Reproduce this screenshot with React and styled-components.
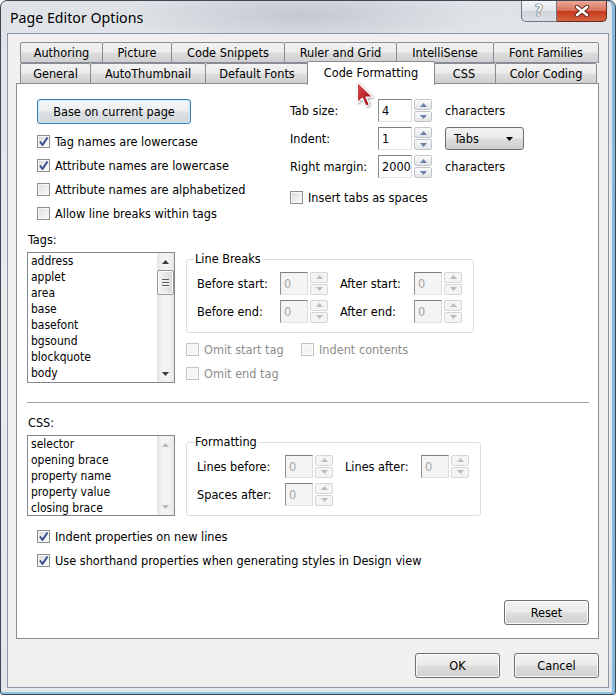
import React from "react";
import styled, { createGlobalStyle } from "styled-components";

const GlobalStyle = createGlobalStyle`
  html, body {
    margin: 0;
    padding: 0;
    background: #ffffff;
  }
  body {
    font-family: "DejaVu Sans Condensed", "DejaVu Sans", sans-serif;
    font-stretch: condensed;
    font-size: 12.6px;
    color: #000;
  }
  * {
    box-sizing: border-box;
  }
`;

const backTabs = [
  { label: "Authoring", w: 83 },
  { label: "Picture", w: 70 },
  { label: "Code Snippets", w: 114 },
  { label: "Ruler and Grid", w: 113 },
  { label: "IntelliSense", w: 98 },
  { label: "Font Families", w: 106 },
];
const frontTabs = [
  { label: "General", w: 71 },
  { label: "AutoThumbnail", w: 116 },
  { label: "Default Fonts", w: 104 },
  { label: "Code Formatting", w: 128, selected: true },
  { label: "CSS", w: 64 },
  { label: "Color Coding", w: 102 },
];
const tagItems = ["address", "applet", "area", "base", "basefont", "bgsound", "blockquote", "body"];
const cssItems = ["selector", "opening brace", "property name", "property value", "closing brace"];

function Checkbox({ checked, disabled }) {
  return (
    <CheckBoxBox $disabled={disabled}>
      {checked && (
        <svg width="11" height="11" viewBox="0 0 11 11">
          <path d="M2 5.5 L4.5 9 L9.5 1.5" fill="none" stroke="#3a4c94" strokeWidth="2" strokeLinejoin="round" />
        </svg>
      )}
    </CheckBoxBox>
  );
}

function Check({ label, checked, disabled, w }) {
  return (
    <CheckRow $w={w}>
      <Checkbox checked={checked} disabled={disabled} />
      <CheckLabel $disabled={disabled}>{label}</CheckLabel>
    </CheckRow>
  );
}

function Arrow({ up, color }) {
  return (
    <svg width="7" height="4" viewBox="0 0 7 4">
      <path d={up ? "M0 4 L3.5 0 L7 4 Z" : "M0 0 L7 0 L3.5 4 Z"} fill={color} />
    </svg>
  );
}

function Spinner({ value, w, disabled }) {
  const c = disabled ? "#b9bcc0" : "#6d82a8";
  return (
    <SpinWrap>
      <SpinInput $w={w} $disabled={disabled}>{value}</SpinInput>
      <SpinButtons>
        <SpinBtn $disabled={disabled}><Arrow up color={c} /></SpinBtn>
        <SpinBtn $disabled={disabled}><Arrow color={c} /></SpinBtn>
      </SpinButtons>
    </SpinWrap>
  );
}

function ListBox({ items, h, disabledScroll }) {
  const c = disabledScroll ? "#b5b5b5" : "#3c3c3c";
  return (
    <List $h={h}>
      <ListItems>
        {items.map((it) => (
          <ListItem key={it}>{it}</ListItem>
        ))}
      </ListItems>
      <ScrollBar>
        <ScrollArrow><Arrow up color={c} /></ScrollArrow>
        <ScrollTrack>
          {!disabledScroll && (
            <Thumb>
              <Grip />
              <Grip />
              <Grip />
            </Thumb>
          )}
        </ScrollTrack>
        <ScrollArrow><Arrow color={c} /></ScrollArrow>
      </ScrollBar>
    </List>
  );
}

export default function App() {
  return (
    <>
      <GlobalStyle />
      <Window>
        <TitleBar>
          <Title>Page Editor Options</Title>
          <Captions>
            <CaptionButton>
              <HelpGlyph>?</HelpGlyph>
            </CaptionButton>
            <CaptionButton $close>
              <svg width="16" height="12" viewBox="0 0 16 12">
                <path d="M3 2 L13 10 M13 2 L3 10" stroke="#5b2418" strokeWidth="4.4" strokeLinecap="round" />
                <path d="M3 2 L13 10 M13 2 L3 10" stroke="#ffffff" strokeWidth="2.6" strokeLinecap="round" />
              </svg>
            </CaptionButton>
          </Captions>
        </TitleBar>

        <Client>
          <TabRow $back>
            {backTabs.map((t) => (
              <Tab key={t.label} $w={t.w}>{t.label}</Tab>
            ))}
          </TabRow>
          <TabRow>
            {frontTabs.map((t) => (
              <Tab key={t.label} $w={t.w} $selected={t.selected}>{t.label}</Tab>
            ))}
          </TabRow>

          <Panel>
            <TopSection>
              <LeftCol>
                <Button $w={154} $focused>Base on current page</Button>
                <CheckStack>
                  <Check label="Tag names are lowercase" checked />
                  <Check label="Attribute names are lowercase" checked />
                  <Check label="Attribute names are alphabetized" />
                  <Check label="Allow line breaks within tags" />
                </CheckStack>
              </LeftCol>
              <RightCol>
                <FieldRow>
                  <span>Tab size:</span>
                  <Spinner value="4" w={34} />
                  <span>characters</span>
                </FieldRow>
                <FieldRow>
                  <span>Indent:</span>
                  <Spinner value="1" w={34} />
                  <Select>
                    <span>Tabs</span>
                    <Arrow color="#000" />
                  </Select>
                </FieldRow>
                <FieldRow>
                  <span>Right margin:</span>
                  <Spinner value="2000" w={34} />
                  <span>characters</span>
                </FieldRow>
                <InsertRow>
                  <Check label="Insert tabs as spaces" />
                </InsertRow>
              </RightCol>
            </TopSection>

            <SectionLabel>Tags:</SectionLabel>
            <ListRow>
              <ListBox items={tagItems} h={131} />
              <SideStack>
                <GroupBox $w={288}>
                  <Legend>Line Breaks</Legend>
                  <SpinGrid $cols="83px 48px 86px 48px">
                    <span>Before start:</span>
                    <Spinner value="0" w={28} disabled />
                    <GridLabel>After start:</GridLabel>
                    <Spinner value="0" w={28} disabled />
                    <span>Before end:</span>
                    <Spinner value="0" w={28} disabled />
                    <GridLabel>After end:</GridLabel>
                    <Spinner value="0" w={28} disabled />
                  </SpinGrid>
                </GroupBox>
                <OmitStack>
                  <CheckLine>
                    <Check label="Omit start tag" disabled w={115} />
                    <Check label="Indent contents" disabled />
                  </CheckLine>
                  <Check label="Omit end tag" disabled />
                </OmitStack>
              </SideStack>
            </ListRow>

            <Separator />

            <SectionLabel $tight>CSS:</SectionLabel>
            <ListRow>
              <ListBox items={cssItems} h={81} disabledScroll />
              <GroupBox $w={295}>
                <Legend>Formatting</Legend>
                <SpinGrid $cols="88px 48px 88px 48px">
                  <span>Lines before:</span>
                  <Spinner value="0" w={28} disabled />
                  <GridLabel>Lines after:</GridLabel>
                  <Spinner value="0" w={28} disabled />
                  <span>Spaces after:</span>
                  <Spinner value="0" w={28} disabled />
                </SpinGrid>
              </GroupBox>
            </ListRow>

            <BottomChecks>
              <Check label="Indent properties on new lines" checked />
              <Check label="Use shorthand properties when generating styles in Design view" checked />
            </BottomChecks>

            <ResetRow>
              <Button $w={85}>Reset</Button>
            </ResetRow>
          </Panel>

          <Footer>
            <Button $w={85}>OK</Button>
            <Button $w={85}>Cancel</Button>
          </Footer>
        </Client>

        <Cursor width="19" height="27" viewBox="0 0 13 19">
          <defs>
            <linearGradient id="cur" x1="0" y1="0" x2="1" y2="1">
              <stop offset="0" stopColor="#e8464a" />
              <stop offset="1" stopColor="#8c1016" />
            </linearGradient>
          </defs>
          <path d="M0.8 0.8 L0.8 15.5 L4.3 12.2 L6.8 17.8 L9.3 16.7 L6.9 11.3 L11.6 11.3 Z" fill="url(#cur)" stroke="#ffffff" strokeWidth="0.9" strokeLinejoin="round" />
        </Cursor>
      </Window>
    </>
  );
}

const Window = styled.div`
  position: relative;
  width: 616px;
  height: 695px;
  display: flex;
  flex-direction: column;
  padding: 0 6px 6px 6px;
  border: 1px solid #3d4753;
  border-radius: 7px 7px 3px 3px;
  background:
    radial-gradient(ellipse 180px 30px at 300px 14px, rgba(160, 168, 178, 0.45), transparent),
    linear-gradient(180deg, #dfe3e8 0%, #e9ecef 45%, #e3e7eb 100%);
  box-shadow: inset -3px 0 0 #86b9de, inset 0 -2px 0 #8fc3e2;
`;

const TitleBar = styled.div`
  height: 32px;
  display: flex;
  justify-content: space-between;
  align-items: flex-start;
`;

const Title = styled.div`
  font-family: "Noto Sans", "Open Sans", sans-serif;
  font-stretch: normal;
  font-size: 14.2px;
  line-height: 20px;
  padding: 7px 0 0 3px;
  color: #000;
`;

const Captions = styled.div`
  display: flex;
  margin-right: 2px;
`;

const CaptionButton = styled.div`
  width: ${(p) => (p.$close ? 50 : 36)}px;
  height: 21px;
  display: flex;
  align-items: center;
  justify-content: center;
  border: 1px solid ${(p) => (p.$close ? "#6a2a1e" : "#6d7781")};
  border-top: none;
  border-left: ${(p) => (p.$close ? "none" : "1px solid #6d7781")};
  border-radius: ${(p) => (p.$close ? "0 0 5px 0" : "0 0 0 5px")};
  background: ${(p) =>
    p.$close
      ? "linear-gradient(180deg, #e9a996 0%, #d9705a 48%, #c7391c 52%, #d4613f 100%)"
      : "linear-gradient(180deg, #f3f5f7 0%, #e3e7eb 48%, #d0d6dc 52%, #dbe0e5 100%)"};
`;

const HelpGlyph = styled.span`
  font-family: "DejaVu Sans", sans-serif;
  font-weight: bold;
  font-size: 15px;
  color: #f4f4f4;
  text-shadow: 0 0 1px #4b4f55, 0 0 1px #4b4f55, 0 0 1px #4b4f55;
`;

const Client = styled.div`
  flex: 1;
  display: flex;
  flex-direction: column;
  border: 1px solid #8b97a4;
  background: #f0f0f0;
  padding: 8px 9px 9px 8px;
`;

const TabRow = styled.div`
  position: relative;
  z-index: ${(p) => (p.$back ? 0 : 2)};
  display: flex;
  height: 21px;
  margin-left: 4px;
`;

const Tab = styled.div`
  flex: 0 0 ${(p) => p.$w}px;
  position: relative;
  display: flex;
  align-items: center;
  justify-content: center;
  white-space: nowrap;
  height: ${(p) => (p.$selected ? 24 : 21)}px;
  margin: ${(p) => (p.$selected ? "-2px -2px 0 -2px" : "0 0 0 -1px")};
  z-index: ${(p) => (p.$selected ? 2 : 0)};
  border: 1px solid #898c95;
  border-bottom: ${(p) => (p.$selected ? "none" : "1px solid #898c95")};
  border-radius: 2px 2px 0 0;
  background: ${(p) =>
    p.$selected ? "#ffffff" : "linear-gradient(180deg, #f2f2f2 0%, #ebebeb 48%, #dddddd 52%, #cfcfcf 100%)"};
  padding-bottom: ${(p) => (p.$selected ? 3 : 0)}px;
  &:first-child {
    margin-left: ${(p) => (p.$selected ? -2 : 0)}px;
  }
`;

const Panel = styled.div`
  position: relative;
  z-index: 1;
  flex: 1;
  display: flex;
  flex-direction: column;
  margin-top: -1px;
  border: 1px solid #898c95;
  background: #ffffff;
  padding: 15px 9px 13px 10px;
`;

const TopSection = styled.div`
  display: flex;
  padding-left: 10px;
`;

const LeftCol = styled.div`
  width: 253px;
  display: flex;
  flex-direction: column;
`;

const CheckStack = styled.div`
  margin-top: 5px;
  display: flex;
  flex-direction: column;
`;

const RightCol = styled.div`
  display: flex;
  flex-direction: column;
  gap: 5px;
`;

const FieldRow = styled.div`
  display: grid;
  grid-template-columns: 88px 67px auto;
  align-items: center;
  height: 23px;
  white-space: nowrap;
`;

const InsertRow = styled.div`
  margin-top: 2px;
`;

const Button = styled.div`
  width: ${(p) => p.$w}px;
  height: 25px;
  display: flex;
  align-items: center;
  justify-content: center;
  border: 1px solid ${(p) => (p.$focused ? "#3c7fb1" : "#707070")};
  border-radius: 3px;
  background: ${(p) =>
    p.$focused
      ? "linear-gradient(180deg, #f4f6f8 0%, #eceef0 48%, #dde1e4 52%, #d2d7db 100%)"
      : "linear-gradient(180deg, #f2f2f2 0%, #ebebeb 48%, #dddddd 52%, #cfcfcf 100%)"};
  box-shadow: ${(p) => (p.$focused ? "inset 0 0 0 1px #c7e8f8" : "inset 0 0 0 1px #fbfbfb")};
`;

const CheckRow = styled.div`
  display: flex;
  align-items: center;
  gap: 5px;
  height: 24px;
  width: ${(p) => (p.$w ? `${p.$w}px` : "auto")};
  white-space: nowrap;
`;

const CheckBoxBox = styled.div`
  width: 13px;
  height: 13px;
  flex: none;
  display: flex;
  align-items: center;
  justify-content: center;
  border: 1px solid ${(p) => (p.$disabled ? "#c4c4c4" : "#8e8f8f")};
  background: ${(p) => (p.$disabled ? "#f4f4f4" : "linear-gradient(135deg, #d8d8d8 0%, #f0f0f0 60%, #fbfbfb 100%)")};
  box-shadow: inset 0 0 0 1px ${(p) => (p.$disabled ? "#fafafa" : "#f6f6f6")};
`;

const CheckLabel = styled.span`
  color: ${(p) => (p.$disabled ? "#8d8d8d" : "#000")};
`;

const SpinWrap = styled.div`
  display: flex;
  gap: 2px;
  align-items: center;
`;

const SpinInput = styled.div`
  width: ${(p) => p.$w}px;
  height: 23px;
  display: flex;
  align-items: center;
  padding-left: 3px;
  border: 1px solid;
  border-color: #7e7e7e #dadada #e3e3e3 #8f8f8f;
  background: ${(p) => (p.$disabled ? "#f4f4f4" : "#ffffff")};
  color: ${(p) => (p.$disabled ? "#a3a3a3" : "#000")};
`;

const SpinButtons = styled.div`
  display: flex;
  flex-direction: column;
  gap: 1px;
`;

const SpinBtn = styled.div`
  width: 18px;
  height: 11px;
  display: flex;
  align-items: center;
  justify-content: center;
  border: 1px solid ${(p) => (p.$disabled ? "#d6d6d6" : "#c2c6cc")};
  border-radius: 2px;
  background: ${(p) => (p.$disabled ? "#f4f4f4" : "linear-gradient(180deg, #fafafa, #e3e5e8)")};
`;

const Select = styled.div`
  width: 79px;
  height: 23px;
  display: flex;
  align-items: center;
  justify-content: space-between;
  padding: 0 10px 0 8px;
  border: 1px solid #707070;
  border-radius: 3px;
  background: linear-gradient(180deg, #f2f2f2 0%, #ebebeb 48%, #dddddd 52%, #cfcfcf 100%);
`;

const SectionLabel = styled.div`
  margin-top: ${(p) => (p.$tight ? 11 : 7)}px;
  line-height: 16px;
  padding-left: 1px;
`;

const ListRow = styled.div`
  margin-top: 4px;
  display: flex;
  align-items: flex-start;
  gap: 11px;
`;

const List = styled.div`
  width: 148px;
  height: ${(p) => p.$h}px;
  display: flex;
  border: 1px solid #828790;
  background: #ffffff;
`;

const ListItems = styled.div`
  flex: 1;
  overflow: hidden;
  padding: 0 0 0 3px;
  font-size: 12px;
`;

const ListItem = styled.div`
  line-height: 16px;
  white-space: nowrap;
`;

const ScrollBar = styled.div`
  width: 17px;
  display: flex;
  flex-direction: column;
  background: linear-gradient(90deg, #e3e3e3 0%, #f3f3f3 30%, #f3f3f3 70%, #e6e6e6 100%);
`;

const ScrollArrow = styled.div`
  height: 17px;
  flex: none;
  display: flex;
  align-items: center;
  justify-content: center;
`;

const ScrollTrack = styled.div`
  flex: 1;
  display: flex;
  flex-direction: column;
`;

const Thumb = styled.div`
  height: 25px;
  display: flex;
  flex-direction: column;
  align-items: center;
  justify-content: center;
  gap: 2px;
  border: 1px solid #959595;
  border-radius: 2px;
  background: linear-gradient(90deg, #f3f3f3 0%, #e8e8e8 50%, #d6d6d6 100%);
  box-shadow: inset 0 0 0 1px #fbfbfb;
`;

const Grip = styled.div`
  width: 7px;
  height: 1px;
  background: #5e5e5e;
  box-shadow: 0 1px 0 #f5f5f5;
`;

const SideStack = styled.div`
  display: flex;
  flex-direction: column;
`;

const GroupBox = styled.fieldset`
  margin: 0;
  width: ${(p) => p.$w}px;
  min-width: 0;
  border: 1px solid #d5dfe5;
  border-radius: 3px;
  padding: 5px 10px 9px 10px;
`;

const Legend = styled.legend`
  padding: 0 1px;
  margin-left: -3px;
  line-height: 14px;
`;

const SpinGrid = styled.div`
  display: grid;
  grid-template-columns: ${(p) => p.$cols};
  row-gap: 4px;
  align-items: center;
  & > * {
    height: 24px;
    display: flex;
    align-items: center;
    white-space: nowrap;
  }
`;

const GridLabel = styled.span`
  padding-left: 12px;
`;

const OmitStack = styled.div`
  margin-top: 4px;
  display: flex;
  flex-direction: column;
`;

const CheckLine = styled.div`
  display: flex;
`;

const Separator = styled.div`
  margin-top: 17px;
  height: 2px;
  border-top: 1px solid #a0a0a0;
  border-bottom: 1px solid #ffffff;
`;

const BottomChecks = styled.div`
  margin-top: 8px;
  padding-left: 10px;
  display: flex;
  flex-direction: column;
`;

const ResetRow = styled.div`
  margin-top: auto;
  display: flex;
  justify-content: flex-end;
`;

const Footer = styled.div`
  margin-top: 14px;
  display: flex;
  justify-content: flex-end;
  gap: 14px;
`;

const Cursor = styled.svg`
  position: absolute;
  left: 355px;
  top: 80px;
  z-index: 5;
  filter: drop-shadow(1px 1px 1px rgba(0, 0, 0, 0.35));
`;
